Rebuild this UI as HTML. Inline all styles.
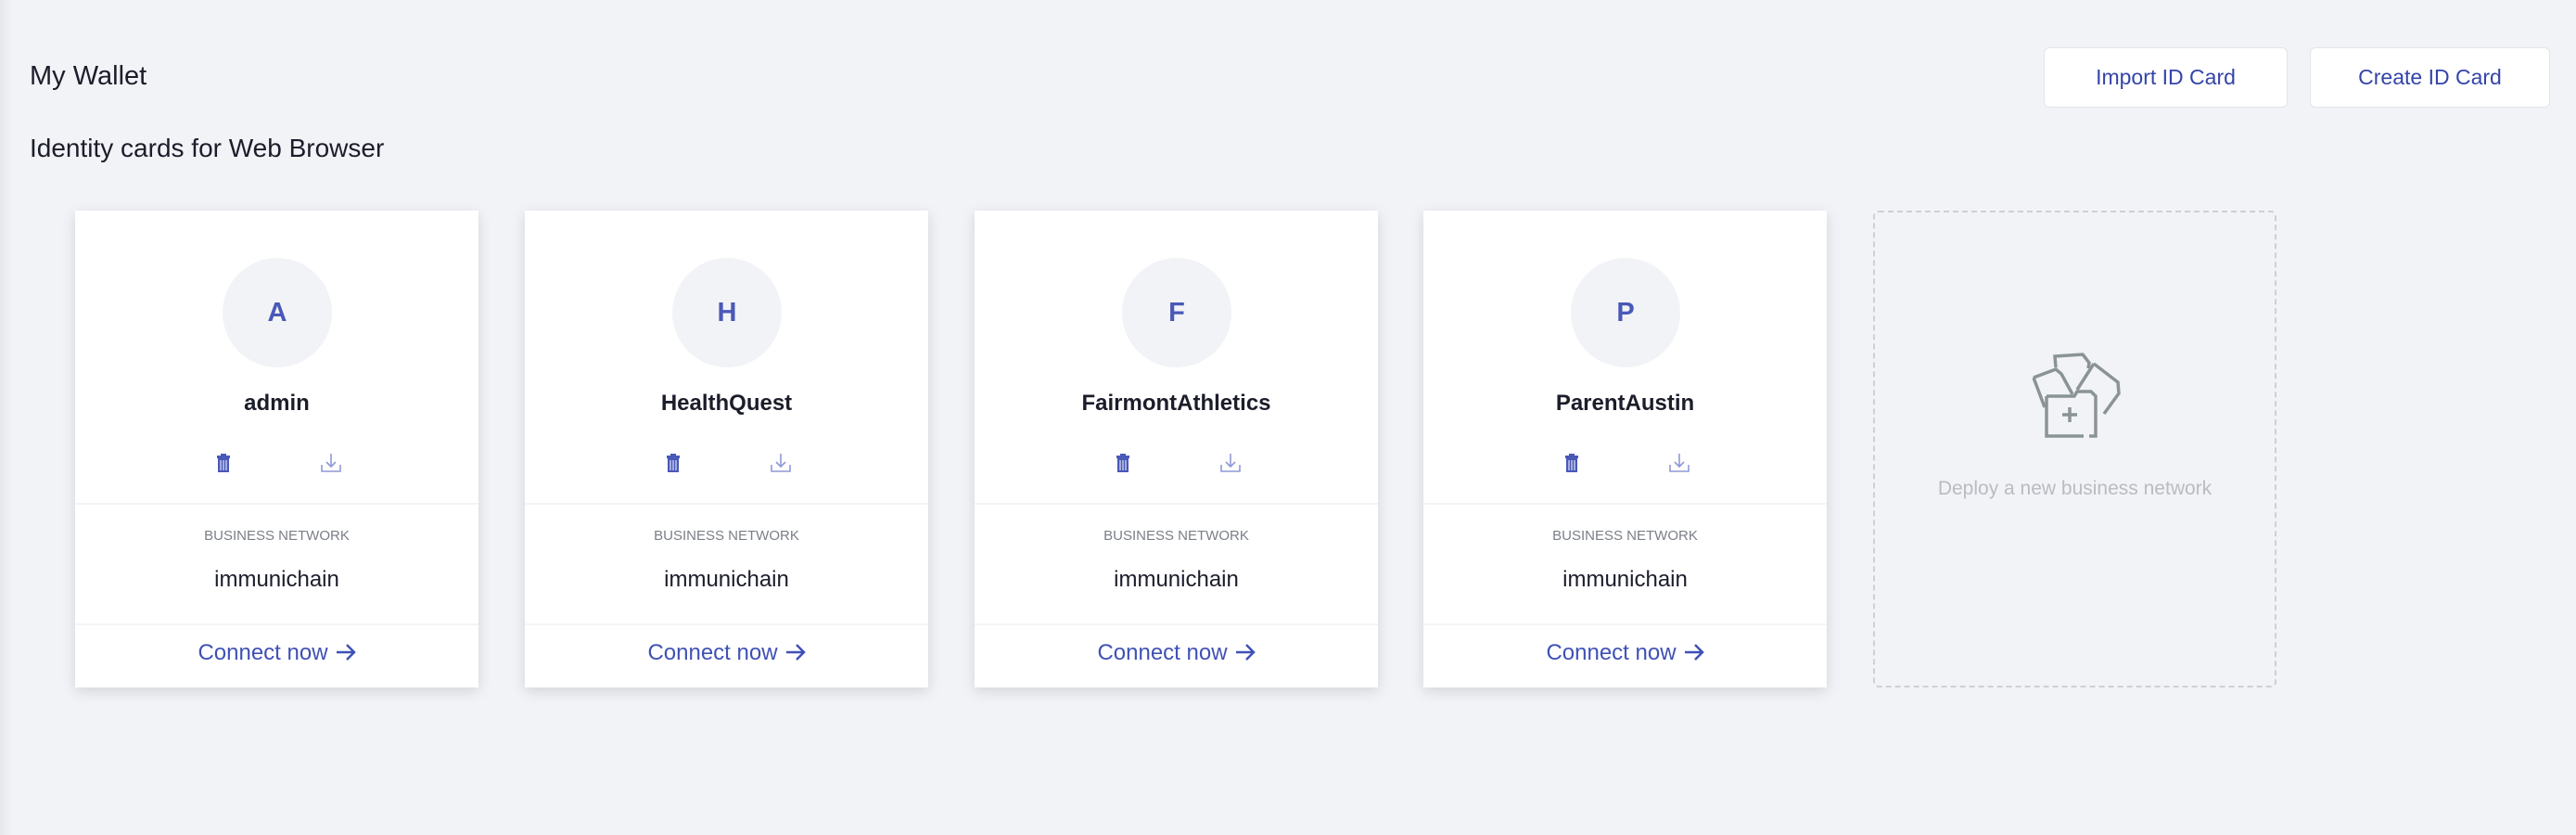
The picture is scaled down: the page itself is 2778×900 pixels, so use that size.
<!DOCTYPE html>
<html><head><meta charset="utf-8"><style>
*{margin:0;padding:0;box-sizing:border-box}
body{width:2778px;height:900px;background:#f2f3f7;font-family:"Liberation Sans",sans-serif;position:relative;overflow:hidden}
.edge{position:absolute;left:0;top:0;width:14px;height:900px;background:linear-gradient(to right,#e6e7eb,#f2f3f7)}
.t1{position:absolute;left:32px;top:66px;font-size:29px;color:#1b1d2a}
.t2{position:absolute;left:32px;top:144px;font-size:28px;color:#1b1d2a}
.btn{position:absolute;top:51px;height:65px;background:#fff;border:1px solid #e3e5ea;border-radius:6px;color:#3444a8;font-size:23px;text-align:center;line-height:63px}
.card{position:absolute;top:227px;width:435px;height:514px;background:#fff;box-shadow:0 4px 14px rgba(0,0,0,.13)}
.av{position:absolute;left:159px;top:51px;width:118px;height:118px;border-radius:50%;background:#f2f3f7;color:#4a58b8;font-size:29px;font-weight:bold;text-align:center;line-height:118px}
.nm{position:absolute;left:0;right:0;top:194px;text-align:center;font-size:24px;font-weight:bold;color:#1b1d2a}
.tr{position:absolute;left:152px;top:262px}
.dl{position:absolute;left:265px;top:262px}
.hr{position:absolute;left:0;right:0;height:2px;background:#f3f4f6}
.bn{position:absolute;left:0;right:0;top:342px;text-align:center;font-size:15px;color:#7a7f86}
.im{position:absolute;left:0;right:0;top:384px;text-align:center;font-size:24px;color:#1b1d2a}
.cn{position:absolute;left:0;right:0;top:463px;text-align:center;font-size:24px;color:#3f51b5}
.cn svg{vertical-align:-3px;margin-left:8px}
.dash{position:absolute;left:2020px;top:227px;width:435px;height:514px;border:2px dashed #cdd0d5;border-radius:6px}
.dt{position:absolute;left:0;right:0;top:286px;text-align:center;font-size:21px;color:#b8bcc1}
</style></head><body>
<div class="edge"></div>
<div class="t1">My Wallet</div>
<div class="t2">Identity cards for Web Browser</div>
<div class="btn" style="left:2204px;width:263px">Import ID Card</div>
<div class="btn" style="left:2491px;width:259px">Create ID Card</div>

<div class="card" style="left:81px">
<div class="av">A</div><div class="nm">admin</div>
<svg class="tr" width="16" height="20" viewBox="0 0 16 20"><rect x="5" y="0" width="6" height="2" fill="#4a58b8"/><rect x="1" y="2" width="14" height="3" fill="#4a58b8"/><rect x="2" y="5" width="12" height="15" fill="#4a58b8"/><path d="M5 7v11M8 7v11M11 7v11" stroke="#fff" stroke-width="1"/></svg>
<svg class="dl" width="22" height="20" viewBox="0 0 22 20"><path d="M11 0v14M6 9l5 5 5-5M1 12v7h20v-7" stroke="#8f99d6" stroke-width="1.6" fill="none"/></svg>
<div class="hr" style="top:315px"></div><div class="bn">BUSINESS NETWORK</div><div class="im">immunichain</div>
<div class="hr" style="top:445px"></div><div class="cn">Connect now<svg width="22" height="22" viewBox="0 0 22 22"><path d="M1 11h19M12 3l8 8-8 8" stroke="#3f51b5" stroke-width="2.5" fill="none"/></svg></div></div>

<div class="card" style="left:566px">
<div class="av">H</div><div class="nm">HealthQuest</div>
<svg class="tr" width="16" height="20" viewBox="0 0 16 20"><rect x="5" y="0" width="6" height="2" fill="#4a58b8"/><rect x="1" y="2" width="14" height="3" fill="#4a58b8"/><rect x="2" y="5" width="12" height="15" fill="#4a58b8"/><path d="M5 7v11M8 7v11M11 7v11" stroke="#fff" stroke-width="1"/></svg>
<svg class="dl" width="22" height="20" viewBox="0 0 22 20"><path d="M11 0v14M6 9l5 5 5-5M1 12v7h20v-7" stroke="#8f99d6" stroke-width="1.6" fill="none"/></svg>
<div class="hr" style="top:315px"></div><div class="bn">BUSINESS NETWORK</div><div class="im">immunichain</div>
<div class="hr" style="top:445px"></div><div class="cn">Connect now<svg width="22" height="22" viewBox="0 0 22 22"><path d="M1 11h19M12 3l8 8-8 8" stroke="#3f51b5" stroke-width="2.5" fill="none"/></svg></div></div>

<div class="card" style="left:1051px">
<div class="av">F</div><div class="nm">FairmontAthletics</div>
<svg class="tr" width="16" height="20" viewBox="0 0 16 20"><rect x="5" y="0" width="6" height="2" fill="#4a58b8"/><rect x="1" y="2" width="14" height="3" fill="#4a58b8"/><rect x="2" y="5" width="12" height="15" fill="#4a58b8"/><path d="M5 7v11M8 7v11M11 7v11" stroke="#fff" stroke-width="1"/></svg>
<svg class="dl" width="22" height="20" viewBox="0 0 22 20"><path d="M11 0v14M6 9l5 5 5-5M1 12v7h20v-7" stroke="#8f99d6" stroke-width="1.6" fill="none"/></svg>
<div class="hr" style="top:315px"></div><div class="bn">BUSINESS NETWORK</div><div class="im">immunichain</div>
<div class="hr" style="top:445px"></div><div class="cn">Connect now<svg width="22" height="22" viewBox="0 0 22 22"><path d="M1 11h19M12 3l8 8-8 8" stroke="#3f51b5" stroke-width="2.5" fill="none"/></svg></div></div>

<div class="card" style="left:1535px">
<div class="av">P</div><div class="nm">ParentAustin</div>
<svg class="tr" width="16" height="20" viewBox="0 0 16 20"><rect x="5" y="0" width="6" height="2" fill="#4a58b8"/><rect x="1" y="2" width="14" height="3" fill="#4a58b8"/><rect x="2" y="5" width="12" height="15" fill="#4a58b8"/><path d="M5 7v11M8 7v11M11 7v11" stroke="#fff" stroke-width="1"/></svg>
<svg class="dl" width="22" height="20" viewBox="0 0 22 20"><path d="M11 0v14M6 9l5 5 5-5M1 12v7h20v-7" stroke="#8f99d6" stroke-width="1.6" fill="none"/></svg>
<div class="hr" style="top:315px"></div><div class="bn">BUSINESS NETWORK</div><div class="im">immunichain</div>
<div class="hr" style="top:445px"></div><div class="cn">Connect now<svg width="22" height="22" viewBox="0 0 22 22"><path d="M1 11h19M12 3l8 8-8 8" stroke="#3f51b5" stroke-width="2.5" fill="none"/></svg></div></div>

<div class="dash">
<svg style="position:absolute;left:168px;top:150px" width="100" height="96" viewBox="0 0 100 96" fill="none" stroke="#8b9494" stroke-width="3.5">
<path d="M3 28l24-9 6 5 12 22M3 28l12 32"/>
<path d="M27 17l-1-12 30-2 7 9-1 6"/>
<path d="M68 13l26 20 1 12-16 22M68 13l-18 28"/>
<path d="M17 48h30l3-5h15l5 5v43h-7m-6 0h-40V48"/>
<path d="M42 60v16M34 68h16"/>
</svg>
<div class="dt">Deploy a new business network</div></div>
</body></html>
